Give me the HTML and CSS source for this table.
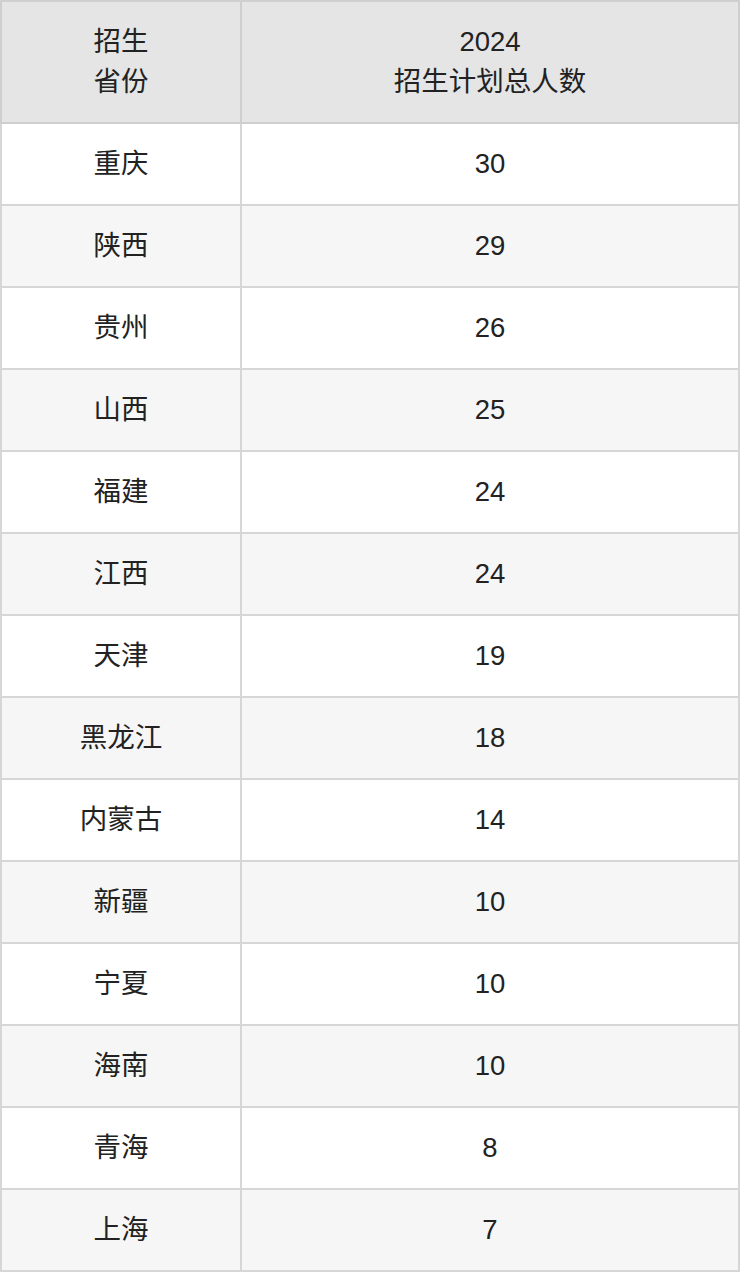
FILE: index.html
```html
<!DOCTYPE html>
<html lang="zh">
<head>
<meta charset="utf-8">
<link rel="stylesheet" href="styles.css">
</head>
<body>
<table class="plan">
  <colgroup><col class="c1"><col class="c2"></colgroup>
  <thead>
    <tr><th>招生<br>省份</th><th>2024<br>招生计划总人数</th></tr>
  </thead>
  <tbody>
    <tr><td>重庆</td><td>30</td></tr>
    <tr><td>陕西</td><td>29</td></tr>
    <tr><td>贵州</td><td>26</td></tr>
    <tr><td>山西</td><td>25</td></tr>
    <tr><td>福建</td><td>24</td></tr>
    <tr><td>江西</td><td>24</td></tr>
    <tr><td>天津</td><td>19</td></tr>
    <tr><td>黑龙江</td><td>18</td></tr>
    <tr><td>内蒙古</td><td>14</td></tr>
    <tr><td>新疆</td><td>10</td></tr>
    <tr><td>宁夏</td><td>10</td></tr>
    <tr><td>海南</td><td>10</td></tr>
    <tr><td>青海</td><td>8</td></tr>
    <tr><td>上海</td><td>7</td></tr>
  </tbody>
</table>
</body>
</html>
```
FILE: styles.css
```css
html, body {
  margin: 0;
  padding: 0;
  background: #ffffff;
}
.plan {
  width: 740px;
  table-layout: fixed;
  border-collapse: collapse;
  font-family: "Liberation Sans", "Noto Sans CJK SC", sans-serif;
  font-size: 27.5px;
  color: #222222;
}
.c1 { width: 240px; }
.plan th,
.plan td {
  border: 2px solid #d6d6d6;
  text-align: center;
  vertical-align: middle;
  padding: 0;
}
.plan th {
  background: #e5e5e5;
  border-color: #cfcfcf;
  font-weight: normal;
  line-height: 40px;
  padding: 20px 0;
}
.plan td {
  line-height: 80px;
}
.plan tbody tr:nth-child(even) td {
  background: #f6f6f6;
}
```
